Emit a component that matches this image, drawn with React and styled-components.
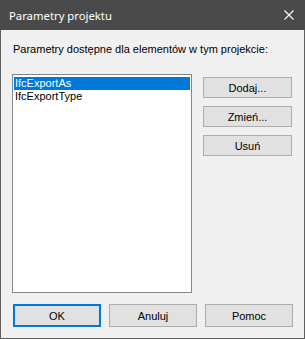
import React, { useState } from 'react';
import styled, { createGlobalStyle } from 'styled-components';

const Global = createGlobalStyle`
    html, body {
        margin: 0;
        padding: 0;
        background: #f0f0f0;
    }
    * {
        box-sizing: border-box;
    }
`

const items = ['IfcExportAs', 'IfcExportType'];

const App = () => {

    const [ selected, setSelected ] = useState(0);

    return (
        <>
            <Global />
            <Window>
                <TitleBar>
                    <Title>Parametry projektu</Title>
                    <Close aria-label="Zamknij">
                        <svg width="10" height="10" viewBox="0 0 10 10">
                            <path d="M0.5 0.5 L9.5 9.5 M9.5 0.5 L0.5 9.5" stroke="#fff" strokeWidth="1.1" fill="none" />
                        </svg>
                    </Close>
                </TitleBar>
                <Body>
                    <Label>Parametry dostępne dla elementów w tym projekcie:</Label>
                    <Main>
                        <List>
                            {items.map((item, i) => (
                                <Row key={item} active={i === selected} onClick={() => setSelected(i)}>{item}</Row>
                            ))}
                        </List>
                        <SideButtons>
                            <Button>Dodaj...</Button>
                            <Button>Zmień...</Button>
                            <Button>Usuń</Button>
                        </SideButtons>
                    </Main>
                    <Footer>
                        <Button wide primary>OK</Button>
                        <Button wide>Anuluj</Button>
                        <Button wide>Pomoc</Button>
                    </Footer>
                </Body>
            </Window>
        </>
    );
};

const Window = styled.div`
    width: 305px;
    height: 339px;
    display: flex;
    flex-direction: column;
    border: 1px solid #5f5f5f;
    border-top: none;
    background: #f0f0f0;
    font-family: "Liberation Sans", Arial, sans-serif;
    font-size: 11px;
    color: #000;
`

const TitleBar = styled.div`
    height: 30px;
    background: #4a4a4a;
    display: flex;
    align-items: center;
    justify-content: space-between;
    margin: 0 -1px;
    padding: 0 11px 0 9px;
`

const Title = styled.span`
    color: #fff;
    font-family: "Noto Sans", "Open Sans", sans-serif;
    font-size: 11.3px;
`

const Close = styled.span`
    display: flex;
    width: 10px;
    height: 10px;
`

const Body = styled.div`
    flex: 1;
    display: flex;
    flex-direction: column;
    padding: 13px 11px 11px 11px;
`

const Label = styled.div`
    line-height: 13px;
    height: 13px;
    padding-left: 1px;
`

const Main = styled.div`
    display: flex;
    margin-top: 18px;
    gap: 11px;
    height: 219px;
`

const List = styled.div`
    width: 180px;
    height: 100%;
    background: #fff;
    border: 1px solid #828790;
    padding: 2px 1px;
`

const Row = styled.div`
    height: 13px;
    line-height: 13px;
    padding-left: 1px;
    background: ${p => p.active ? '#0078d7' : 'transparent'};
    color: ${p => p.active ? '#fff' : '#000'};
    cursor: default;
`

const SideButtons = styled.div`
    display: flex;
    flex-direction: column;
    gap: 8px;
    padding-top: 3px;
`

const Button = styled.button`
    width: ${p => p.wide ? '88px' : '89px'};
    height: ${p => p.wide ? '23px' : '21px'};
    padding: 0;
    background: #e1e1e1;
    border: ${p => p.primary ? '2px solid #0078d7' : '1px solid #adadad'};
    font-family: "Liberation Sans", Arial, sans-serif;
    font-size: 11px;
    color: #000;
`

const Footer = styled.div`
    display: flex;
    gap: 8px;
    margin-top: 11px;
    padding-left: 1px;
`

export default App;
